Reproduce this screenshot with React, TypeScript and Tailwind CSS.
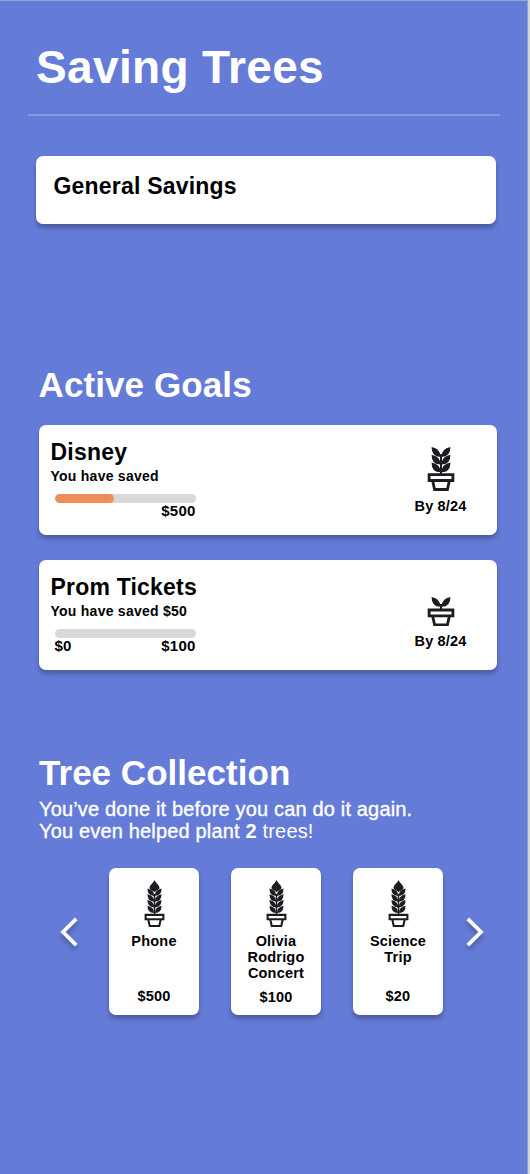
type PlantProps = { pairs: number; bud?: boolean; gap?: number; className: string };

function Plant({ pairs, bud = false, gap = 2.7, className }: PlantProps) {
  const budHeight = bud ? 11.5 : 0;
  const rim = budHeight + 8 + 7.7 * (pairs - 1) + gap;
  const height = rim + 17.7;
  return (
    <svg viewBox={`0 0 28 ${height}`} className={className} fill="#1d1d21">
      {bud && <path d="M14 0C15.5 3.8 20.4 6.5 20.8 10.8C20 13.2 17 14 14 16.2C11 14 8 13.2 7.2 10.8C7.6 6.5 12.5 3.8 14 0Z" />}
      {Array.from({ length: pairs }, (_, i) => {
        const y = budHeight + i * 7.7;
        return (
          <g key={i} transform={`translate(0 ${y})`}>
            <path d="M13.4 9.8Q4.4 9.8 4.6 0Q13.6 1.6 13.4 9.8Z" />
            <path d="M14.6 9.8Q23.6 9.8 23.4 0Q14.4 1.6 14.6 9.8Z" />
          </g>
        );
      })}
      <rect x="13" y={budHeight + 7} width="2" height={rim - budHeight - 6} />
      <g transform={`translate(0 ${rim})`} fill="none" stroke="#1d1d21" strokeWidth="2.8">
        <path d="M2.1 1.4H25.9V7.3H2.1Z" />
        <path d="M5.6 7.3L7.6 16.3H20.4L22.4 7.3" />
      </g>
    </svg>
  );
}

type GoalProps = {
  name: string;
  saved: string;
  start?: string;
  target: string;
  progress: number;
  pairs: number;
};

function Goal({ name, saved, start, target, progress, pairs }: GoalProps) {
  return (
    <article className="flex h-[110px] w-[458px] justify-between rounded-[7px] bg-white pt-[14px] pl-3 text-black shadow-[0_4px_4px_rgba(0,0,0,0.25)]">
      <div className="w-[150px] whitespace-nowrap">
        <h3 className="h-[28px] text-[23px] leading-[26px] tracking-[0.2px] font-bold">{name}</h3>
        <p className="h-[27px] text-[14px] leading-[18px] tracking-[0.25px] font-bold">{saved}</p>
        <div className="ml-1 h-[9px] w-[141px] overflow-hidden rounded-full bg-[#d9d9d9]">
          <div className="h-full rounded-full bg-[#f08e5a]" style={{ width: `${progress}%` }} />
        </div>
        <div className="ml-1 flex w-[141px] justify-between text-[15px] leading-[15px] tracking-[0.2px] font-bold">
          <span>{start}</span>
          <span>{target}</span>
        </div>
      </div>
      <div className="mr-[25px] flex w-[62px] flex-col items-center">
        <div className="flex h-[52px] items-end">
          {pairs > 1 ? (
            <Plant pairs={pairs} className="h-[44px] w-[28px]" />
          ) : (
            <Plant pairs={pairs} gap={3.6} className="h-[29.3px] w-[28px]" />
          )}
        </div>
        <p className="mt-[6px] text-[14.5px] leading-[18px] tracking-[0.15px] font-bold whitespace-nowrap">By 8/24</p>
      </div>
    </article>
  );
}

function TreeCard({ lines, price }: { lines: string[]; price: string }) {
  return (
    <article className="flex h-[147px] w-[90px] flex-col items-center rounded-[7px] bg-white pt-3 pb-[11px] text-center text-[14.5px] leading-4 tracking-[0.2px] font-bold text-black shadow-[0_4px_4px_rgba(0,0,0,0.25)]">
      <Plant pairs={4} bud className="h-[47px] w-[21px] shrink-0" />
      <h3 className="mt-[6px]">
        {lines.map((line) => (
          <span key={line} className="block">{line}</span>
        ))}
      </h3>
      <p className={lines.length > 2 ? "mt-[8px]" : "mt-auto"}>{price}</p>
    </article>
  );
}

function Chevron({ flip = false }: { flip?: boolean }) {
  return (
    <svg
      viewBox="0 0 18 30"
      className="h-[30px] w-[18px] overflow-visible drop-shadow-[0_4px_2px_rgba(0,0,0,0.25)]"
      fill="none"
      stroke="white"
      strokeWidth="3.8"
    >
      <path d={flip ? "M1.8 1.8L15 15L1.8 28.2" : "M16.2 1.8L3 15L16.2 28.2"} />
    </svg>
  );
}

export default function App() {
  return (
    <main className="flex h-[1174px] w-[530px] bg-[#d5d3d0] font-['Liberation_Sans',Arial,sans-serif] text-white">
      <div className="flex w-[528px] flex-col border-t border-r border-t-[#98a3d3] border-r-[#8e9fe0] bg-[#647bd8]">
        <h1 className="mt-[42px] ml-[36px] h-[71px] text-[46px] leading-[48px] tracking-[0.35px] font-bold">Saving Trees</h1>
        <hr className="ml-[28px] h-[2px] w-[472px] border-0 bg-[#8799e1]" />
        <section className="mt-[40px] ml-[35.5px] h-[67.5px] w-[460px] rounded-[7px] bg-white pt-[17px] pl-[18px] shadow-[0_4px_4px_rgba(0,0,0,0.25)]">
          <h2 className="text-[23px] leading-[26px] tracking-[0.2px] font-bold text-black">General Savings</h2>
        </section>
        <section className="mt-[141.5px] ml-[38.5px]">
          <h2 className="h-[60px] text-[35px] leading-[40px] tracking-[0.1px] font-bold">Active Goals</h2>
          <div className="flex flex-col gap-[25px]">
            <Goal name="Disney" saved="You have saved" target="$500" progress={42} pairs={3} />
            <Goal name="Prom Tickets" saved="You have saved $50" start="$0" target="$100" progress={0} pairs={1} />
          </div>
        </section>
        <section className="mt-[83px]">
          <h2 className="ml-[39px] h-[45px] text-[35px] leading-[40px] tracking-[0.03px] font-bold">Tree Collection</h2>
          <p className="ml-[39px] text-[20px] leading-[22px] tracking-[0.17px] whitespace-nowrap">
            <span className="[-webkit-text-stroke:0.35px_white]">You’ve done it before you can do it again.</span>
            <br />
            <span className="[-webkit-text-stroke:0.35px_white]">You even helped plant </span>
            <b>2</b> trees!
          </p>
          <div className="mt-[26px] ml-[60px] flex w-[424px]">
            <div className="pt-[49px]"><Chevron /></div>
            <div className="ml-[31px] flex gap-8">
              <TreeCard lines={["Phone"]} price="$500" />
              <TreeCard lines={["Olivia", "Rodrigo", "Concert"]} price="$100" />
              <TreeCard lines={["Science", "Trip"]} price="$20" />
            </div>
            <div className="ml-auto pt-[49px]"><Chevron flip /></div>
          </div>
        </section>
      </div>
    </main>
  );
}
